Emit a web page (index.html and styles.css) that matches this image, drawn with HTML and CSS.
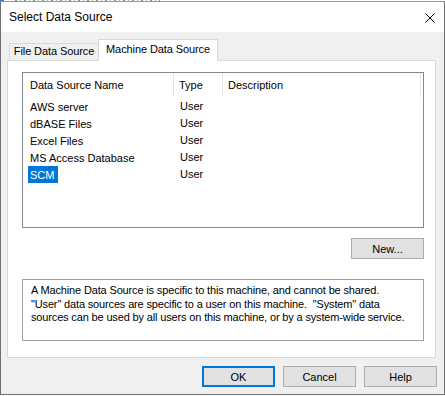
FILE: index.html
```html
<!DOCTYPE html>
<html>
<head>
<meta charset="utf-8">
<title>Select Data Source</title>
<link rel="stylesheet" href="styles.css">
</head>
<body>
<div class="backdrop"><span class="backdrop-icon"></span><span class="backdrop-text"></span></div>
<div class="window">
  <div class="titlebar">
    <span class="title">Select Data Source</span>
    <svg class="close" width="10" height="10" viewBox="0 0 10 10"><path d="M0.5 0.5 L9.5 9.5 M9.5 0.5 L0.5 9.5" stroke="#000" stroke-width="1" fill="none"/></svg>
  </div>
  <div class="client">
    <div class="tabs">
      <div class="tab">File Data Source</div>
      <div class="tab active">Machine Data Source</div>
    </div>
    <div class="panel">
      <div class="list">
        <div class="list-head">
          <div class="hcell c1">Data Source Name</div>
          <div class="hcell c2">Type</div>
          <div class="hcell c3">Description</div>
        </div>
        <div class="row"><div class="cell c1"><span class="name">AWS server</span></div><div class="cell c2">User</div><div class="cell c3"></div></div>
        <div class="row"><div class="cell c1"><span class="name">dBASE Files</span></div><div class="cell c2">User</div><div class="cell c3"></div></div>
        <div class="row"><div class="cell c1"><span class="name">Excel Files</span></div><div class="cell c2">User</div><div class="cell c3"></div></div>
        <div class="row"><div class="cell c1"><span class="name">MS Access Database</span></div><div class="cell c2">User</div><div class="cell c3"></div></div>
        <div class="row"><div class="cell c1"><span class="name selected">SCM</span></div><div class="cell c2">User</div><div class="cell c3"></div></div>
      </div>
      <button class="btn new-btn">New...</button>
      <div class="desc">A Machine Data Source is specific to this machine, and cannot be shared.<br>"User" data sources are specific to a user on this machine. &nbsp;"System" data<br>sources can be used by all users on this machine, or by a system-wide service.</div>
    </div>
    <div class="actions">
      <button class="btn default">OK</button>
      <button class="btn">Cancel</button>
      <button class="btn">Help</button>
    </div>
  </div>
</div>
</body>
</html>
```
FILE: styles.css
```css
* { box-sizing: border-box; }
html, body { margin: 0; padding: 0; }
body {
  background: #ffffff;
  font-family: "Liberation Sans", Arial, sans-serif;
  font-size: 11px;
  color: #000;
  width: 445px;
  height: 396px;
  overflow: hidden;
}
.backdrop {
  height: 1px;
  overflow: hidden;
  display: flex;
}
.backdrop-icon {
  width: 4px;
  height: 1px;
  background: #2a7ad0;
}
.backdrop-text {
  width: 145px;
  height: 1px;
  margin-left: 11px;
  background: repeating-linear-gradient(90deg, #8a8a8a 0 2px, transparent 2px 5px, #b0b0b0 5px 6px, transparent 6px 9px);
}
.window {
  width: 445px;
  height: 394px;
  border: 1px solid #6f6f6f;
  border-top-color: #9a9a9a;
  background: #f0f0f0;
  display: flex;
  flex-direction: column;
}
.titlebar {
  height: 30px;
  flex: none;
  background: #ffffff;
  display: flex;
  align-items: center;
  justify-content: space-between;
  padding: 0 9px 0 8px;
}
.title {
  font-size: 12px;
  line-height: 30px;
}
.close { display: block; margin-top: 1px; }
.client {
  flex: 1;
  padding: 7px 7px 0 6px;
  display: flex;
  flex-direction: column;
}
.tabs {
  display: flex;
  align-items: flex-end;
  height: 22px;
  margin-bottom: -1px;
  padding-left: 2px;
}
.tab {
  width: 90px;
  height: 17px;
  margin-bottom: 1px;
  border: 1px solid #d9d9d9;
  border-bottom: none;
  background: #f0f0f0;
  line-height: 15px;
  text-align: center;
  white-space: nowrap;
  letter-spacing: -0.1px;
}
.tab.active {
  width: 120px;
  height: 22px;
  margin-bottom: 0;
  margin-left: -1px;
  padding-top: 2px;
  background: #ffffff;
  position: relative;
  z-index: 1;
}
.panel {
  width: 429px;
  height: 298px;
  border: 1px solid #d9d9d9;
  background: #ffffff;
  padding: 11px 11px 0 14px;
  display: flex;
  flex-direction: column;
}
.list {
  height: 156px;
  border: 1px solid #828790;
  background: #fff;
}
.list-head, .row {
  display: grid;
  grid-template-columns: 151px 49px 198px;
}
.list-head { height: 25px; }
.hcell {
  height: 24px;
  line-height: 25px;
  border-right: 1px solid #e5e5e5;
  white-space: nowrap;
}
.hcell.c1 { padding-left: 7px; }
.hcell.c2, .hcell.c3 { padding-left: 5px; }
.row { height: 17px; line-height: 17px; }
.cell { white-space: nowrap; }
.cell.c1 { padding-left: 5px; }
.cell.c2 { padding-left: 6px; }
.name {
  display: inline-block;
  padding: 1px 4px 0 2px;
  height: 17px;
  line-height: 17px;
}
.name.selected {
  background: #0078d7;
  color: #ffffff;
}
.btn {
  font-family: "Liberation Sans", Arial, sans-serif;
  font-size: 11px;
  color: #000;
  width: 73px;
  height: 21px;
  padding: 0;
  background: #e1e1e1;
  border: 1px solid #adadad;
  border-radius: 0;
}
.new-btn {
  align-self: flex-end;
  margin-top: 10px;
}
.desc {
  margin-top: 20px;
  height: 62px;
  border: 1px solid #a0a0a0;
  padding: 4px 0 0 8px;
  line-height: 13.5px;
  white-space: nowrap;
  letter-spacing: -0.15px;
}
.actions {
  display: flex;
  justify-content: flex-end;
  gap: 8px;
  margin-top: 8px;
}
.btn.default {
  border: 2px solid #0078d7;
}
```
